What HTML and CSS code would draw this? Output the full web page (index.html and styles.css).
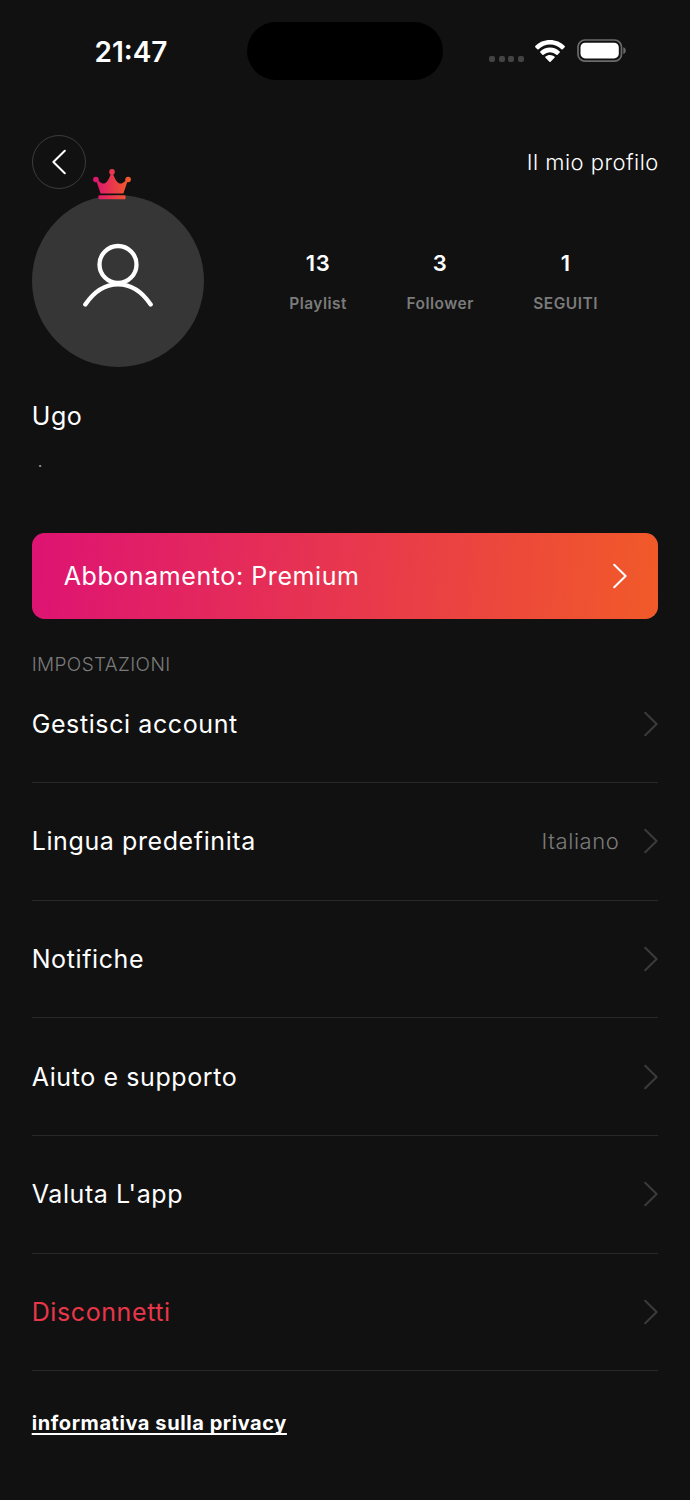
FILE: index.html
```html
<!DOCTYPE html>
<html lang="it">
<head>
<meta charset="utf-8">
<title>Il mio profilo</title>
<link rel="stylesheet" href="styles.css">
</head>
<body>
<svg class="defs" aria-hidden="true"><symbol id="chevron" viewBox="0 0 14 26"><path d="M1.2 1.7 12.6 13 1.2 24.3"/></symbol></svg>
<div class="screen">
  <div class="status-bar">
    <span class="time">21:47</span>
    <div class="island"></div>
    <div class="indicators">
      <div class="signal"><i></i><i></i><i></i><i></i></div>
      <svg class="wifi" viewBox="0 0 30 22"><path d="M15 0C9.200 0 3.900 2.300.3 6a.9.9 0 0 0 0 1.200l2 2c.4.4.9.4 1.300 0A16.200 16.200 0 0 1 15 4.500c4.400 0 8.400 1.700 11.400 4.700.4.4.9.4 1.300 0l2-2a.9.9 0 0 0 0-1.200C26.100 2.300 20.800 0 15 0Z"/><path d="M15 7.600c-3.800 0-7.200 1.400-9.700 3.800-.4.3-.4.8 0 1.200l2.100 2.100c.3.3.8.3 1.200 0a9.300 9.300 0 0 1 12.800 0c.4.3.9.3 1.200 0l2.100-2.100c.4-.4.4-.9 0-1.200A14 14 0 0 0 15 7.600Z"/><path d="M15 15c-1.800 0-3.300.6-4.500 1.600-.4.3-.4.8 0 1.200l3.900 3.900c.3.4.9.4 1.200 0l3.900-3.900c.4-.4.4-.9 0-1.200A7 7 0 0 0 15 15Z"/></svg>
      <svg class="battery" viewBox="0 0 50 24"><rect x="1" y="1" width="43.500" height="21.200" rx="7" fill="none" stroke="#6b6b6b" stroke-width="1.700"/><rect x="3.500" y="3.700" width="38.300" height="15.800" rx="4.700" fill="#fff"/><path d="M46.300 8.300c3.200.8 3.200 6 0 6.800Z" fill="#6b6b6b"/></svg>
    </div>
  </div>

  <header class="header">
    <button class="back" aria-label="Indietro"><svg class="chevron chevron-back"><use href="#chevron"/></svg></button>
    <h1 class="title">Il mio profilo</h1>
  </header>

  <section class="profile">
    <div class="avatar">
      <svg class="crown" viewBox="0 0 38 31"><defs><linearGradient id="crown-fill" gradientUnits="userSpaceOnUse" x1="2" y1="0" x2="36" y2="0"><stop offset="0" stop-color="#e01472"/><stop offset="1" stop-color="#f15a29"/></linearGradient></defs><g fill="url(#crown-fill)"><path d="M7.600 24.500 3.200 11.500 4.400 10.700C7.500 13.400 9 14.800 11.400 14.600 14.200 13.500 16.300 9.500 17.700 5.300H20.100C21.700 9.500 23.700 13.500 26.600 14.600 29 14.800 30.500 13.400 33.600 10.700L34.800 11.500 30.400 24.500Z"/><circle cx="19" cy="2.900" r="2.800"/><circle cx="2.900" cy="10.500" r="2.800"/><circle cx="35.100" cy="10.500" r="2.800"/><rect x="5.500" y="26.300" width="27" height="3.900" rx="1"/></g></svg>
      <svg class="person" viewBox="0 0 70 66"><circle cx="35" cy="21.500" r="18.500"/><path d="M2.300 61.500C10 50 21.500 41.300 35 41.300S60 50 67.700 61.500"/></svg>
    </div>
    <div class="stats">
      <div class="stat"><b class="stat-value">13</b><span class="stat-label">Playlist</span></div>
      <div class="stat"><b class="stat-value">3</b><span class="stat-label">Follower</span></div>
      <div class="stat"><b class="stat-value">1</b><span class="stat-label">SEGUITI</span></div>
    </div>
  </section>
  <h2 class="name">Ugo</h2>
  <p class="bio">.</p>

  <a class="premium"><span>Abbonamento: Premium</span><svg class="chevron"><use href="#chevron"/></svg></a>

  <h3 class="section-title">IMPOSTAZIONI</h3>
  <nav class="settings">
    <a class="row"><span class="row-label">Gestisci account</span><svg class="chevron"><use href="#chevron"/></svg></a>
    <a class="row"><span class="row-label">Lingua predefinita</span><span class="row-value">Italiano</span><svg class="chevron"><use href="#chevron"/></svg></a>
    <a class="row"><span class="row-label">Notifiche</span><svg class="chevron"><use href="#chevron"/></svg></a>
    <a class="row"><span class="row-label">Aiuto e supporto</span><svg class="chevron"><use href="#chevron"/></svg></a>
    <a class="row"><span class="row-label">Valuta L'app</span><svg class="chevron"><use href="#chevron"/></svg></a>
    <a class="row"><span class="row-label danger">Disconnetti</span><svg class="chevron"><use href="#chevron"/></svg></a>
  </nav>
  <a class="privacy">informativa sulla privacy</a>
</div>
</body>
</html>
```
FILE: styles.css
```css
* { box-sizing: border-box; margin: 0; padding: 0; }
body { background: #111; color: #fff; font-family: Inter, "Liberation Sans", sans-serif; }
svg { display: block; flex: none; }
.defs { width: 0; height: 0; position: absolute; }
.screen { width: 690px; height: 1500px; padding: 0 31.700px; overflow: hidden; display: flex; flex-direction: column; }

.status-bar { height: 102px; display: grid; grid-template-columns: 1fr 196px 1fr; align-items: center; margin: 0 -31.700px; }
.time { padding: 1px 0 0 15px; text-align: center; font-size: 28px; font-weight: 600; line-height: 34px; }
.island { height: 58px; border-radius: 29px; background: #000; }
.indicators { display: flex; align-items: center; padding-left: 46px; }
.signal { display: flex; gap: 3.500px; padding-top: 15px; margin-right: 11.500px; }
.signal i { width: 6px; height: 6px; border-radius: 2px; background: #444; }
.wifi { width: 30px; height: 22px; fill: #fff; margin-right: 12px; }
.battery { width: 50px; height: 24px; }

.header { display: flex; justify-content: space-between; align-items: center; height: 54px; margin-top: 32.500px; }
.back { width: 54px; height: 54px; border: 1.500px solid #3c3c3c; border-radius: 50%; background: none; display: flex; align-items: center; justify-content: center; }
.title { font-size: 22px; font-weight: 300; letter-spacing: .48px; margin-right: -.5px; }
.chevron { width: 14px; height: 26px; fill: none; stroke: #3b3b3b; stroke-width: 2; stroke-linecap: round; stroke-linejoin: round; }
.chevron-back { stroke: #fff; transform: scaleX(-1); }

.profile { display: flex; align-items: center; margin-top: 6px; }
.avatar { position: relative; width: 172.500px; height: 172.500px; border-radius: 50%; background: #363636; display: flex; justify-content: center; }
.crown { position: absolute; left: 61px; top: -26px; width: 38px; height: 31px; }
.person { width: 70px; height: 66px; margin-top: 48px; fill: none; stroke: #fff; stroke-width: 4.300; stroke-linecap: round; }
.stats { display: flex; gap: 59.500px; margin: 3px 0 0 85px; }
.stat { display: flex; flex-direction: column; align-items: center; gap: 17px; }
.stat-value { font-size: 22px; font-weight: 600; line-height: 27px; letter-spacing: .6px; }
.stat-label { font-size: 15.500px; font-weight: 600; line-height: 20px; letter-spacing: .48px; color: #7b7b7b; }
.name { font-size: 25px; font-weight: 400; line-height: 30px; letter-spacing: .6px; margin-top: 34px; }
.bio { font-size: 16px; line-height: 20px; color: #999; margin: 20px 0 0 6px; }

.premium { height: 86px; margin-top: 61.500px; padding: 0 31px 0 32px; border-radius: 12.500px; background: linear-gradient(94deg, #de1373, #f15a29); display: flex; align-items: center; justify-content: space-between; font-size: 25px; letter-spacing: .58px; }
.premium .chevron { stroke: #fff; }
.section-title { font-size: 19px; font-weight: 300; line-height: 24px; letter-spacing: .38px; color: #7b7b7b; margin-top: 34px; }
.settings { margin-top: -11px; }
.row { display: flex; align-items: center; height: 117.640px; border-bottom: 1.500px solid #292929; }
.row-label { flex: 1; font-size: 25px; letter-spacing: .6px; }
.row-value { font-size: 22px; font-weight: 300; letter-spacing: .55px; color: #7b7b7b; margin-right: 25px; }
.danger { color: #e8364a; }
.privacy { align-self: flex-start; margin-top: 40px; font-size: 20px; font-weight: 700; line-height: 24px; letter-spacing: .58px; text-decoration: underline; text-decoration-thickness: 2px; text-underline-offset: 3px; text-decoration-skip-ink: none; }
```
